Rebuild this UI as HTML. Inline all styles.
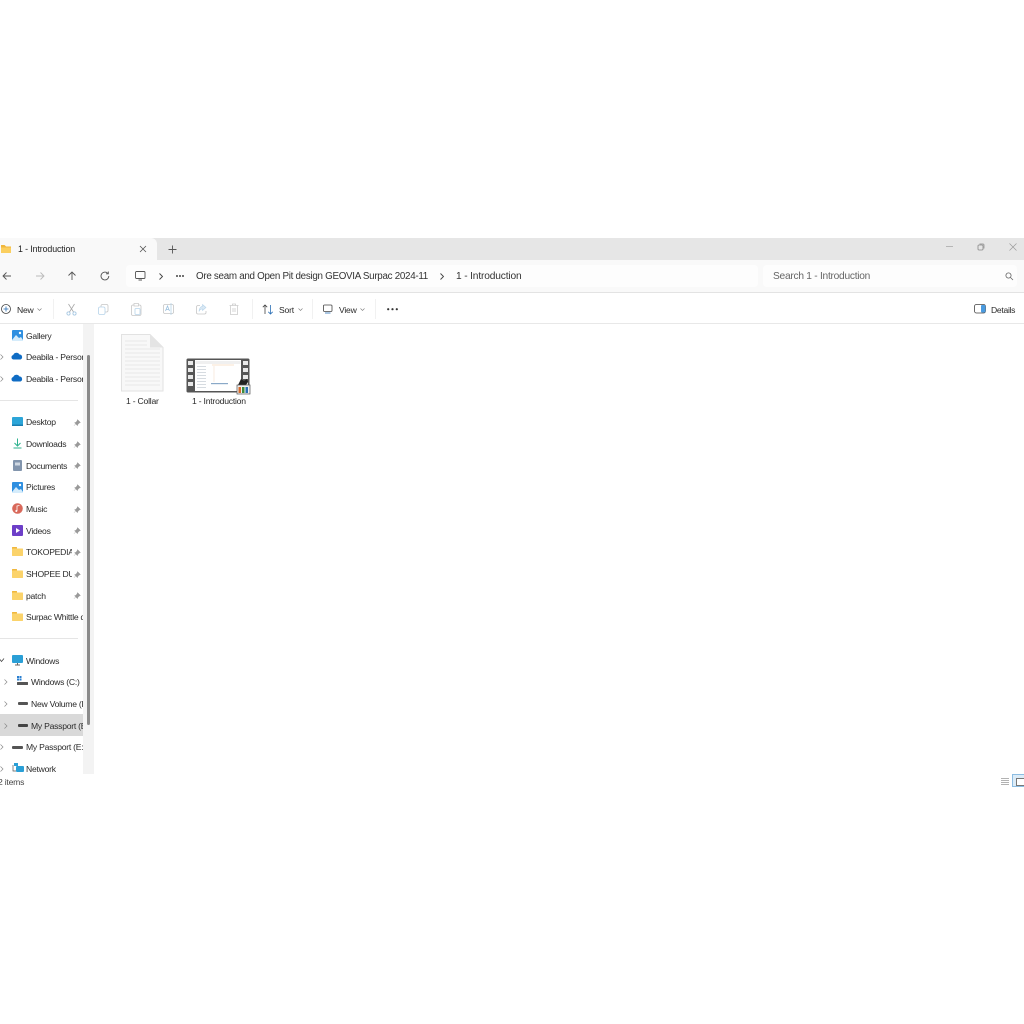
<!DOCTYPE html>
<html><head><meta charset="utf-8"><style>
html,body{margin:0;padding:0;background:#fff}
#r{position:relative;width:1024px;height:1024px;overflow:hidden;background:#fff;font-family:"Liberation Sans",sans-serif;color:#2a2a2a}
.a{position:absolute}
.t{position:absolute;white-space:nowrap;font-size:8.6px;line-height:12px;letter-spacing:-.22px;filter:blur(.3px)}
.n{position:absolute;white-space:nowrap;font-size:8.6px;line-height:12px;letter-spacing:-.25px;overflow:hidden;filter:blur(.3px)}
svg{position:absolute;overflow:visible;filter:blur(.25px)}
</style></head><body><div id="r">
<!-- title bar -->
<div class="a" style="left:0;top:238px;width:1024px;height:22px;background:#e6e6e6"></div>
<div class="a" style="left:0;top:238px;width:157px;height:22px;background:#f9f9f9;border-radius:0 6px 0 0"></div>
<svg style="left:0;top:243px" width="12" height="11"><path d="M1 2h3.500l1.500 1.500h5v6.500h-10z" fill="#fbcf5f"/><path d="M1 2h3.500l1.500 1.500h5v1h-10z" fill="#f0b73d"/></svg>
<div class="t" style="left:18px;top:243px;font-size:8.800px;font-weight:500;color:#222;letter-spacing:-.1px">1 - Introduction</div>
<svg style="left:139px;top:245px" width="8" height="8"><path d="M1 1l6 6M7 1l-6 6" stroke="#555" stroke-width=".8"/></svg>
<svg style="left:168px;top:245px" width="9" height="9"><path d="M4.500 .5v8M.5 4.500h8" stroke="#555" stroke-width=".9"/></svg>
<svg style="left:946px;top:243px" width="8" height="8"><path d="M0 3.500h7" stroke="#aaa" stroke-width=".8"/></svg>
<svg style="left:977px;top:243px" width="9" height="8"><rect x="1" y="2" width="5" height="5" rx="1" fill="none" stroke="#888" stroke-width=".8"/><path d="M2.500 1h3.500a1 1 0 0 1 1 1v3.500" fill="none" stroke="#888" stroke-width=".7"/></svg>
<svg style="left:1009px;top:243px" width="8" height="8"><path d="M.5 .5l7 7M7.500 .5l-7 7" stroke="#999" stroke-width=".7"/></svg>
<!-- address row -->
<div class="a" style="left:0;top:260px;width:1024px;height:32px;background:#f9f9f9"></div>
<div class="a" style="left:126px;top:265px;width:632px;height:22px;background:#fdfdfd;border-radius:4px"></div>
<div class="a" style="left:763px;top:265px;width:254px;height:22px;background:#fdfdfd;border-radius:4px"></div>
<div class="a" style="left:0;top:292px;width:1024px;height:1px;background:#e3e3e3"></div>
<svg style="left:2px;top:271px" width="10" height="10"><path d="M9 5H1M4.500 1.500L1 5l3.500 3.500" fill="none" stroke="#555" stroke-width=".9"/></svg>
<svg style="left:35px;top:271px" width="10" height="10"><path d="M1 5h8M5.500 1.500L9 5 5.500 8.500" fill="none" stroke="#bbb" stroke-width=".9"/></svg>
<svg style="left:67px;top:271px" width="10" height="10"><path d="M5 9V1M1.500 4.500L5 1l3.500 3.500" fill="none" stroke="#555" stroke-width=".9"/></svg>
<svg style="left:100px;top:271px" width="10" height="10"><path d="M8.800 5a3.900 3.900 0 1 1-1.200-2.800M8.300 .5v2.300H6" fill="none" stroke="#555" stroke-width=".9"/></svg>
<svg style="left:135px;top:271px" width="11" height="10"><rect x=".5" y=".5" width="9.500" height="7" rx="1" fill="none" stroke="#555" stroke-width=".9"/><path d="M3.500 9h3.500" stroke="#555"/></svg>
<svg style="left:158px;top:273px" width="6" height="7"><path d="M1.500 .5l3 3-3 3" fill="none" stroke="#444" stroke-width=".9"/></svg>
<div class="a" style="left:176px;top:275px;width:8px;height:2px;background:radial-gradient(circle at 1px 1px,#444 .9px,transparent 1px) 0 0/3px 2px"></div>
<div class="t" style="left:196px;top:271px;font-size:9.800px;color:#333;letter-spacing:-.28px">Ore seam and Open Pit design GEOVIA Surpac 2024-11</div>
<svg style="left:439px;top:273px" width="6" height="7"><path d="M1.500 .5l3 3-3 3" fill="none" stroke="#444" stroke-width=".9"/></svg>
<div class="t" style="left:456px;top:271px;font-size:10.200px;color:#333;letter-spacing:-.15px">1 - Introduction</div>
<div class="t" style="left:773px;top:271px;font-size:10.200px;color:#666;letter-spacing:-.26px">Search 1 - Introduction</div>
<svg style="left:1005px;top:272px" width="9" height="9"><circle cx="3.500" cy="3.500" r="2.600" fill="none" stroke="#666" stroke-width=".8"/><path d="M5.500 5.500l2.500 2.500" stroke="#666" stroke-width=".8"/></svg>
<!-- toolbar -->
<div class="a" style="left:0;top:323px;width:1024px;height:1px;background:#e8e8e8"></div>
<svg style="left:1px;top:304px" width="11" height="11"><circle cx="5" cy="5" r="4.500" fill="none" stroke="#444" stroke-width=".8"/><path d="M5 2.500v5M2.500 5h5" stroke="#2a6fb5" stroke-width=".8"/></svg>
<div class="t" style="left:17px;top:304px">New</div>
<svg style="left:37px;top:308px" width="5" height="3"><path d="M.5 .5L2.500 2.500 4.500 .5" fill="none" stroke="#777" stroke-width=".6"/></svg>
<div class="a" style="left:53px;top:299px;width:1px;height:20px;background:#f1f1f1"></div>
<svg style="left:66px;top:303px" width="11" height="13"><path d="M2.500 1l5 8M8.500 1l-5 8" stroke="#a8a8a8" stroke-width=".8"/><circle cx="2.500" cy="10.500" r="1.600" fill="none" stroke="#9fc3e0" stroke-width=".8"/><circle cx="8.500" cy="10.500" r="1.600" fill="none" stroke="#9fc3e0" stroke-width=".8"/></svg>
<svg style="left:98px;top:304px" width="11" height="11"><rect x="3" y=".5" width="7" height="7.500" rx="1.500" fill="none" stroke="#c6c6c6" stroke-width=".8"/><rect x=".5" y="3" width="6.500" height="7.500" rx="1.500" fill="#fff" stroke="#b7d4ea" stroke-width=".8"/></svg>
<svg style="left:131px;top:303px" width="11" height="13"><rect x=".5" y="2" width="9.500" height="10.500" rx="1.500" fill="none" stroke="#c6c6c6" stroke-width=".8"/><rect x="3" y=".5" width="4.500" height="2.500" fill="#fff" stroke="#c6c6c6" stroke-width=".7"/><rect x="4" y="5.500" width="5" height="6" rx="1" fill="#fff" stroke="#b7d4ea" stroke-width=".8"/></svg>
<svg style="left:163px;top:303px" width="12" height="12"><rect x=".5" y="1.500" width="10" height="9" rx="1.500" fill="none" stroke="#c6c6c6" stroke-width=".8"/><path d="M2.500 8l2-5 2 5M3.200 6.500h2.600" fill="none" stroke="#9cc1df" stroke-width=".8"/><path d="M8 0v12" stroke="#b7d4ea" stroke-width=".8"/></svg>
<svg style="left:196px;top:304px" width="11" height="11"><path d="M4 1.500H2a1.500 1.500 0 0 0-1.500 1.500v5.500A1.500 1.500 0 0 0 2 10h6.500A1.500 1.500 0 0 0 10 8.500V7" fill="none" stroke="#c6c6c6" stroke-width=".8"/><path d="M6.500 .5l3.500 3-3.500 3V5C4.500 5 3.500 6 3 7.500 3 5 4.500 2.500 6.500 2.200z" fill="#d9e8f4" stroke="#b7d4ea" stroke-width=".6"/></svg>
<svg style="left:229px;top:303px" width="10" height="12"><path d="M.5 2.500h9M3.500 2.500V1h3v1.500M1.500 2.500v9h7v-9M4 5v4M6 5v4" fill="none" stroke="#cccccc" stroke-width=".8"/></svg>
<div class="a" style="left:252px;top:299px;width:1px;height:20px;background:#f1f1f1"></div>
<svg style="left:262px;top:304px" width="12" height="11"><path d="M3 10V1M.8 3.200L3 1l2.200 2.200" fill="none" stroke="#444" stroke-width=".8"/><path d="M8.500 1v9M6.300 7.800l2.200 2.200 2.200-2.200" fill="none" stroke="#2a6fb5" stroke-width=".8"/></svg>
<div class="t" style="left:279px;top:304px">Sort</div>
<svg style="left:298px;top:308px" width="5" height="3"><path d="M.5 .5L2.500 2.500 4.500 .5" fill="none" stroke="#777" stroke-width=".6"/></svg>
<div class="a" style="left:312px;top:299px;width:1px;height:20px;background:#f1f1f1"></div>
<svg style="left:323px;top:304px" width="11" height="11"><rect x=".5" y="1" width="8.500" height="6.500" rx="1" fill="none" stroke="#444" stroke-width=".8"/><path d="M2 9h5.500" stroke="#2a6fb5" stroke-width=".8"/></svg>
<div class="t" style="left:339px;top:304px">View</div>
<svg style="left:360px;top:308px" width="5" height="3"><path d="M.5 .5L2.500 2.500 4.500 .5" fill="none" stroke="#777" stroke-width=".6"/></svg>
<div class="a" style="left:375px;top:299px;width:1px;height:20px;background:#f1f1f1"></div>
<svg style="left:387px;top:308px" width="11" height="3"><circle cx="1.200" cy="1.200" r="1.100" fill="#333"/><circle cx="5.500" cy="1.200" r="1.100" fill="#333"/><circle cx="9.800" cy="1.200" r="1.100" fill="#333"/></svg>
<svg style="left:974px;top:304px" width="12" height="10"><rect x=".5" y=".5" width="11" height="8.500" rx="2" fill="none" stroke="#444" stroke-width=".8"/><rect x="7" y="1" width="4.500" height="7.500" rx="1" fill="#4a9be0"/></svg>
<div class="t" style="left:991px;top:304px;letter-spacing:-.3px">Details</div>
<!-- sidebar strip -->
<div class="a" style="left:83px;top:324px;width:11px;height:450px;background:#f3f3f3"></div>
<div class="a" style="left:87px;top:355px;width:3px;height:370px;background:#8a8a8a;border-radius:2px"></div>
<div class="a" style="left:0;top:714px;width:83px;height:22px;background:#d9d9d9"></div>
<div class="a" style="left:0;top:400px;width:78px;height:1px;background:#e5e5e5"></div>
<div class="a" style="left:0;top:638px;width:78px;height:1px;background:#e5e5e5"></div>
<!-- icons -->
<svg style="left:12px;top:330px" width="11" height="11"><rect width="11" height="11" rx="1" fill="#2f8fe0"/><path d="M0 10l4-5 3 3 2-1 2 3v1H0z" fill="#d5ecfb"/><circle cx="8" cy="3" r="1.200" fill="#fff"/></svg>
<svg style="left:11px;top:352px" width="12" height="8"><path d="M2.500 7.500a2.300 2.300 0 0 1-.3-4.500A3.500 3.500 0 0 1 8.500 2.500a2.600 2.600 0 0 1 1 5z" fill="#0f6cc4"/></svg>
<svg style="left:11px;top:374px" width="12" height="8"><path d="M2.500 7.500a2.300 2.300 0 0 1-.3-4.500A3.500 3.500 0 0 1 8.500 2.500a2.600 2.600 0 0 1 1 5z" fill="#0f6cc4"/></svg>
<svg style="left:12px;top:417px" width="11" height="10"><rect width="11" height="9" rx="1" fill="#2ca5d8"/><rect y="7.500" width="11" height="1.500" fill="#1a7db0"/></svg>
<svg style="left:13px;top:438px" width="9" height="11"><path d="M4.500 .5v7M1.500 5l3 3 3-3" fill="none" stroke="#2db28e" stroke-width="1"/><path d="M.5 10h8" stroke="#2db28e" stroke-width="1"/></svg>
<svg style="left:13px;top:460px" width="9" height="11"><rect width="9" height="11" rx="1" fill="#8295ad"/><rect x="2" y="2.500" width="5" height="3" fill="#cfd8e2"/></svg>
<svg style="left:12px;top:482px" width="11" height="11"><rect width="11" height="11" rx="1" fill="#2f8fe0"/><path d="M0 10l4-5 3 3 2-1 2 3v1H0z" fill="#d5ecfb"/><circle cx="8" cy="3" r="1.200" fill="#fff"/></svg>
<svg style="left:12px;top:503px" width="11" height="11"><circle cx="5.500" cy="5.500" r="5.300" fill="#d8685a"/><path d="M5 8V3l2.500-.5" fill="none" stroke="#fff" stroke-width=".8"/><circle cx="4.300" cy="8" r="1" fill="#fff"/></svg>
<svg style="left:12px;top:525px" width="11" height="11"><rect width="11" height="11" rx="1" fill="#6d3fc8"/><path d="M4 3l4 2.500L4 8z" fill="#fff"/></svg>
<svg style="left:12px;top:547px" width="11" height="9"><rect y="0" width="5" height="3" rx=".5" fill="#f0b73d"/><rect y="1.500" width="11" height="7.500" rx=".6" fill="#fbd36b"/></svg>
<svg style="left:12px;top:569px" width="11" height="9"><rect y="0" width="5" height="3" rx=".5" fill="#f0b73d"/><rect y="1.500" width="11" height="7.500" rx=".6" fill="#fbd36b"/></svg>
<svg style="left:12px;top:591px" width="11" height="9"><rect y="0" width="5" height="3" rx=".5" fill="#f0b73d"/><rect y="1.500" width="11" height="7.500" rx=".6" fill="#fbd36b"/></svg>
<svg style="left:12px;top:612px" width="11" height="9"><rect y="0" width="5" height="3" rx=".5" fill="#f0b73d"/><rect y="1.500" width="11" height="7.500" rx=".6" fill="#fbd36b"/></svg>
<svg style="left:12px;top:655px" width="11" height="11"><rect width="11" height="8" rx="1" fill="#2a9fd6"/><path d="M3 10h5M5.500 8v2" stroke="#666" stroke-width="1"/></svg>
<svg style="left:17px;top:676px" width="11" height="10"><rect width="2" height="2" fill="#2a7fd0"/><rect x="2.500" width="2" height="2" fill="#2a7fd0"/><rect y="2.500" width="2" height="2" fill="#2a7fd0"/><rect x="2.500" y="2.500" width="2" height="2" fill="#2a7fd0"/><rect y="6" width="11" height="3" rx=".5" fill="#555"/></svg>
<div class="a" style="left:18px;top:702px;width:10px;height:3px;background:#555;border-radius:1px"></div>
<div class="a" style="left:18px;top:724px;width:10px;height:3px;background:#444;border-radius:1px"></div>
<div class="a" style="left:12px;top:746px;width:11px;height:3px;background:#555;border-radius:1px"></div>
<svg style="left:12px;top:763px" width="12" height="11"><rect x="2" y="0" width="4" height="3" fill="#2a9fd6"/><rect x="4" y="3" width="8" height="6" rx="1" fill="#2a9fd6"/><path d="M1 2v6h3" fill="none" stroke="#555" stroke-width=".7"/></svg>
<!-- chevrons -->
<svg style="left:0;top:354px" width="4" height="6"><path d="M.5 .5L3 3 .5 5.500" fill="none" stroke="#888" stroke-width=".7"/></svg>
<svg style="left:0;top:376px" width="4" height="6"><path d="M.5 .5L3 3 .5 5.500" fill="none" stroke="#888" stroke-width=".7"/></svg>
<svg style="left:0;top:658px" width="5" height="5"><path d="M0 1.500l1.500 2L4 .5" fill="none" stroke="#444" stroke-width=".8"/></svg>
<svg style="left:4px;top:679px" width="4" height="6"><path d="M.5 .5L3 3 .5 5.500" fill="none" stroke="#888" stroke-width=".7"/></svg>
<svg style="left:4px;top:701px" width="4" height="6"><path d="M.5 .5L3 3 .5 5.500" fill="none" stroke="#888" stroke-width=".7"/></svg>
<svg style="left:4px;top:723px" width="4" height="6"><path d="M.5 .5L3 3 .5 5.500" fill="none" stroke="#888" stroke-width=".7"/></svg>
<svg style="left:0;top:744px" width="4" height="6"><path d="M.5 .5L3 3 .5 5.500" fill="none" stroke="#888" stroke-width=".7"/></svg>
<svg style="left:0;top:766px" width="4" height="6"><path d="M.5 .5L3 3 .5 5.500" fill="none" stroke="#888" stroke-width=".7"/></svg>
<!-- labels -->
<div class="n" style="left:26px;top:330px;width:57px">Gallery</div>
<div class="n" style="left:26px;top:351px;width:57px">Deabila - Personal</div>
<div class="n" style="left:26px;top:373px;width:57px">Deabila - Personal</div>
<div class="n" style="left:26px;top:416px;width:46px">Desktop</div>
<div class="n" style="left:26px;top:438px;width:46px">Downloads</div>
<div class="n" style="left:26px;top:460px;width:46px">Documents</div>
<div class="n" style="left:26px;top:481px;width:46px">Pictures</div>
<div class="n" style="left:26px;top:503px;width:46px">Music</div>
<div class="n" style="left:26px;top:525px;width:46px">Videos</div>
<div class="n" style="left:26px;top:546px;width:46px">TOKOPEDIA SURPAC</div>
<div class="n" style="left:26px;top:568px;width:46px">SHOPEE DUIT</div>
<div class="n" style="left:26px;top:590px;width:46px">patch</div>
<div class="n" style="left:26px;top:611px;width:57px">Surpac Whittle data</div>
<div class="n" style="left:26px;top:655px;width:57px">Windows</div>
<div class="n" style="left:31px;top:676px;width:52px">Windows (C:)</div>
<div class="n" style="left:31px;top:698px;width:52px">New Volume (D:)</div>
<div class="n" style="left:31px;top:720px;width:52px">My Passport (E:)</div>
<div class="n" style="left:26px;top:741px;width:57px">My Passport (E:)</div>
<div class="n" style="left:26px;top:763px;width:57px">Network</div>
<!-- pins -->
<svg style="left:74px;top:419px" width="7" height="7"><path d="M3.500 .5l3 3-1.200.5-1.500 1.500-.3 1.200-3-3 1.200-.3L3 2z M1.500 5L0 6.800" fill="#999" stroke="#999" stroke-width=".4"/></svg>
<svg style="left:74px;top:441px" width="7" height="7"><path d="M3.500 .5l3 3-1.200.5-1.500 1.500-.3 1.200-3-3 1.200-.3L3 2z M1.500 5L0 6.800" fill="#999" stroke="#999" stroke-width=".4"/></svg>
<svg style="left:74px;top:462px" width="7" height="7"><path d="M3.500 .5l3 3-1.200.5-1.500 1.500-.3 1.200-3-3 1.200-.3L3 2z M1.500 5L0 6.800" fill="#999" stroke="#999" stroke-width=".4"/></svg>
<svg style="left:74px;top:484px" width="7" height="7"><path d="M3.500 .5l3 3-1.200.5-1.500 1.500-.3 1.200-3-3 1.200-.3L3 2z M1.500 5L0 6.800" fill="#999" stroke="#999" stroke-width=".4"/></svg>
<svg style="left:74px;top:506px" width="7" height="7"><path d="M3.500 .5l3 3-1.200.5-1.500 1.500-.3 1.200-3-3 1.200-.3L3 2z M1.500 5L0 6.800" fill="#999" stroke="#999" stroke-width=".4"/></svg>
<svg style="left:74px;top:527px" width="7" height="7"><path d="M3.500 .5l3 3-1.200.5-1.500 1.500-.3 1.200-3-3 1.200-.3L3 2z M1.500 5L0 6.800" fill="#999" stroke="#999" stroke-width=".4"/></svg>
<svg style="left:74px;top:549px" width="7" height="7"><path d="M3.500 .5l3 3-1.200.5-1.500 1.500-.3 1.200-3-3 1.200-.3L3 2z M1.500 5L0 6.800" fill="#999" stroke="#999" stroke-width=".4"/></svg>
<svg style="left:74px;top:571px" width="7" height="7"><path d="M3.500 .5l3 3-1.200.5-1.500 1.500-.3 1.200-3-3 1.200-.3L3 2z M1.500 5L0 6.800" fill="#999" stroke="#999" stroke-width=".4"/></svg>
<svg style="left:74px;top:592px" width="7" height="7"><path d="M3.500 .5l3 3-1.200.5-1.500 1.500-.3 1.200-3-3 1.200-.3L3 2z M1.500 5L0 6.800" fill="#999" stroke="#999" stroke-width=".4"/></svg>
<!-- file icons -->
<svg style="left:120px;top:333px" width="44" height="60">
<path d="M1.500 1.500H30L43 14.500V58H1.500z" fill="#f8f8f8" stroke="#e2e2e2"/>
<path d="M30 1.500V14.500H43z" fill="#e4e4e4"/>
<g stroke="#e3e3e3" stroke-width=".8"><path d="M5 8h22M5 12h22M5 16h35M5 20h35M5 24h35M5 28h35M5 32h35M5 36h35M5 40h35M5 44h35M5 48h35M5 52h35"/></g>
</svg>
<svg style="left:186px;top:358px" width="66" height="37">
<rect x=".5" y=".5" width="63" height="34" rx="1.500" fill="#555"/>
<g fill="#e8e8e8"><rect x="2" y="3" width="5" height="4"/><rect x="2" y="10" width="5" height="4"/><rect x="2" y="17" width="5" height="4"/><rect x="2" y="24" width="5" height="4"/><rect x="57" y="3" width="5" height="4"/><rect x="57" y="10" width="5" height="4"/><rect x="57" y="17" width="5" height="4"/><rect x="57" y="24" width="5" height="4"/></g>
<rect x="9" y="2" width="46" height="31" fill="#fff"/>
<rect x="9.500" y="3" width="45" height="3" fill="#f0f0f0"/>
<rect x="26" y="6.500" width="22" height="1" fill="#f8e3cc"/>
<path d="M28 8v16" stroke="#f6e6d8" stroke-width=".8"/>
<rect x="25" y="25" width="17" height="1.200" fill="#8aa9c8"/>
<g fill="#d6dbe0"><rect x="11" y="8" width="9" height="1"/><rect x="11" y="11" width="9" height="1"/><rect x="11" y="14" width="9" height="1"/><rect x="11" y="17" width="9" height="1"/><rect x="11" y="20" width="9" height="1"/><rect x="11" y="23" width="9" height="1"/><rect x="11" y="26" width="9" height="1"/><rect x="11" y="29" width="9" height="1"/></g>
<path d="M52 27l3-6 3 2 3-2 1 3-2 3z" fill="#222"/>
<rect x="51" y="27" width="13" height="9" fill="#f2f2f2" stroke="#555" stroke-width=".7"/>
<rect x="52.500" y="29" width="2.500" height="6" fill="#d56a2a"/><rect x="56" y="29" width="2.500" height="6" fill="#3c8c3c"/><rect x="59.500" y="29" width="2.500" height="6" fill="#2a6fb5"/>
</svg>
<div class="t" style="left:126px;top:395px">1 - Collar</div>
<div class="t" style="left:192px;top:395px">1 - Introduction</div>
<!-- status bar -->
<div class="t" style="left:-2px;top:776px;color:#444">2 items</div>
<svg style="left:1001px;top:778px" width="8" height="8"><path d="M0 .5h8M0 2.500h8M0 4.500h8M0 6.500h8" stroke="#999" stroke-width=".8"/></svg>
<div class="a" style="left:1012px;top:774px;width:12px;height:13px;background:#dcecf8;border:1px solid #8dbde2;border-right:0;box-sizing:border-box"></div>
<div class="a" style="left:1016px;top:778px;width:8px;height:8px;background:#fff;border:1px solid #777;border-right:0;box-sizing:border-box"></div>
</div></body></html>
